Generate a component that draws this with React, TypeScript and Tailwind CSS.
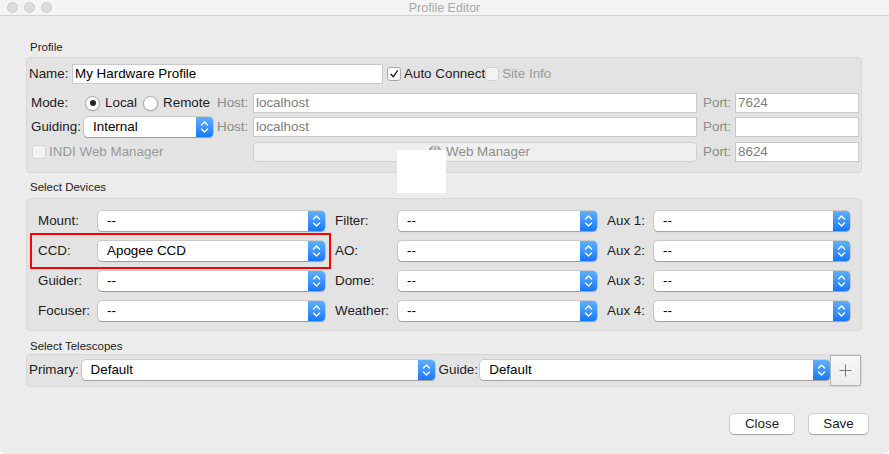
import React from "react";

const FONT = { fontFamily: '"Liberation Sans", Arial, sans-serif' };

function Stepper() {
  return (
    <div className="flex h-full w-[17px] shrink-0 items-center justify-center rounded-r-[4px] bg-gradient-to-b from-[#5fb0ff] to-[#1677fb]">
      <svg width="9" height="14" viewBox="0 0 9 14" fill="none" stroke="white" strokeWidth="1.4" strokeLinecap="round" strokeLinejoin="round">
        <path d="M1.5 5 L4.5 2 L7.5 5" />
        <path d="M1.5 9 L4.5 12 L7.5 9" />
      </svg>
    </div>
  );
}

function Combo({ value, width, className = "" }: { value: string; width: string; className?: string }) {
  return (
    <div
      className={`flex h-[20px] shrink-0 items-stretch rounded-[4px] bg-white shadow-[0_0_0_0.5px_rgba(0,0,0,0.22),0_1px_1px_rgba(0,0,0,0.22)] ${width} ${className}`}
    >
      <div className="flex flex-1 items-center whitespace-nowrap pl-[9px] text-black">{value}</div>
      <Stepper />
    </div>
  );
}

function Field({ value, width, muted }: { value: string; width: string; muted?: boolean }) {
  return (
    <div
      className={`flex h-[20px] shrink-0 items-center border border-[#c9c9c9] bg-white pl-[2px] ${width} ${
        muted ? "text-[#7d7d7d]" : "text-black"
      }`}
    >
      {value}
    </div>
  );
}

function Check({ checked, disabled }: { checked?: boolean; disabled?: boolean }) {
  return (
    <div
      className={`flex h-[14px] w-[14px] shrink-0 items-center justify-center rounded-[3px] border ${
        disabled ? "border-[#d2d2d2] bg-[#f3f3f3]" : "border-[#a9a9a9] bg-white"
      }`}
    >
      {checked && (
        <svg width="10" height="10" viewBox="0 0 10 10" fill="none" stroke="#222" strokeWidth="1.4" strokeLinecap="round" strokeLinejoin="round">
          <path d="M2 5.3 L4.2 7.8 L8.4 1.8" />
        </svg>
      )}
    </div>
  );
}

function Radio({ selected }: { selected?: boolean }) {
  return (
    <div className="flex h-[15px] w-[15px] shrink-0 items-center justify-center rounded-full border border-[#a7a7a7] bg-white shadow-[0_0.5px_1px_rgba(0,0,0,0.15)]">
      {selected && <div className="h-[6px] w-[6px] rounded-full bg-[#262626]" />}
    </div>
  );
}

function Globe() {
  return (
    <svg width="14" height="14" viewBox="0 0 14 14" fill="none" stroke="#9a9a9a" strokeWidth="1.1">
      <circle cx="7" cy="7" r="6" fill="#b5b5b5" />
      <ellipse cx="7" cy="7" rx="2.6" ry="6" stroke="#e8e8e8" />
      <path d="M1 7 H13" stroke="#e8e8e8" />
    </svg>
  );
}

function SectionLabel({ children, className }: { children: React.ReactNode; className: string }) {
  return <div className={`ml-[30px] h-[14px] text-[11.5px] leading-[14px] text-[#222] ${className}`}>{children}</div>;
}

const DEVICE_ROWS = [
  ["Mount:", "--", "Filter:", "--", "Aux 1:", "--"],
  ["CCD:", "Apogee CCD", "AO:", "--", "Aux 2:", "--"],
  ["Guider:", "--", "Dome:", "--", "Aux 3:", "--"],
  ["Focuser:", "--", "Weather:", "--", "Aux 4:", "--"],
];

export default function App() {
  return (
    <div style={FONT} className="relative h-[454px] w-[889px] overflow-hidden rounded-b-[5px] bg-[#ececec] text-[13.4px] text-[#1d1d1d]">
      {/* title bar */}
      <div className="relative flex h-[16px] items-center border-b border-[#d3d3d3] bg-[#f4f4f4]">
        <div className="flex gap-[6px] pl-[7px]">
          <div className="h-[11px] w-[11px] rounded-full border border-[#cdcdcd] bg-[#dcdcdc]" />
          <div className="h-[11px] w-[11px] rounded-full border border-[#cdcdcd] bg-[#dcdcdc]" />
          <div className="h-[11px] w-[11px] rounded-full border border-[#cdcdcd] bg-[#dcdcdc]" />
        </div>
        <div className="absolute left-0 right-0 top-0 text-center text-[12.5px] leading-[16px] text-[#a9a9a9]">Profile Editor</div>
      </div>

      {/* Profile */}
      <SectionLabel className="mt-[24px]">Profile</SectionLabel>
      <div className="ml-[26px] mt-[3px] h-[116px] w-[836px] rounded-[4px] border border-[#d8d8d8] bg-[#e3e3e3]">
        <div className="mt-[6px] flex h-[20px] items-center pl-[2px]">
          <div className="w-[43px]">Name:</div>
          <Field value="My Hardware Profile" width="w-[311px]" />
          <div className="ml-[4px]">
            <Check checked />
          </div>
          <div className="ml-[3px] whitespace-nowrap">Auto Connect</div>
          <Check disabled />
          <div className="ml-[3px] text-[#9a9a9a]">Site Info</div>
        </div>

        <div className="mt-[9px] flex h-[20px] items-center">
          <div className="flex w-[190px] items-center pl-[4px]">
            <div className="w-[54px]">Mode:</div>
            <Radio selected />
            <div className="ml-[5px]">Local</div>
            <div className="ml-[6px]">
              <Radio />
            </div>
            <div className="ml-[5px]">Remote</div>
          </div>
          <div className="w-[36px] text-[#8a8a8a]">Host:</div>
          <Field value="localhost" width="w-[444px]" muted />
          <div className="ml-[6px] w-[32px] text-[#8a8a8a]">Port:</div>
          <Field value="7624" width="w-[124px]" muted />
        </div>

        <div className="mt-[4px] flex h-[20px] items-center">
          <div className="flex w-[190px] items-center pl-[4px]">
            <div className="w-[53px]">Guiding:</div>
            <Combo value="Internal" width="w-[129px]" />
          </div>
          <div className="w-[36px] text-[#8a8a8a]">Host:</div>
          <Field value="localhost" width="w-[444px]" muted />
          <div className="ml-[6px] w-[32px] text-[#8a8a8a]">Port:</div>
          <Field value="" width="w-[124px]" muted />
        </div>

        <div className="mt-[5px] flex h-[20px] items-center">
          <div className="flex w-[190px] items-center pl-[5px]">
            <Check disabled />
            <div className="ml-[3px] whitespace-nowrap text-[#9a9a9a]">INDI Web Manager</div>
          </div>
          <div className="w-[36px]" />
          <div className="flex h-[20px] w-[444px] items-center justify-center gap-[4px] rounded-[4px] border border-[#d0d0d0] bg-[#efefef] pl-[8px] text-[#8d8d8d]">
            <Globe />
            <span>Web Manager</span>
          </div>
          <div className="ml-[6px] w-[32px] text-[#8a8a8a]">Port:</div>
          <Field value="8624" width="w-[124px]" muted />
        </div>
      </div>

      {/* Select Devices */}
      <SectionLabel className="mt-[7px]">Select Devices</SectionLabel>
      <div className="ml-[26px] mt-[4px] flex h-[133px] w-[836px] flex-col gap-[10px] rounded-[4px] border border-[#d8d8d8] bg-[#e3e3e3] pl-[11px] pt-[12px]">
        {DEVICE_ROWS.map(([l1, v1, l2, v2, l3, v3]) => (
          <div key={l1} className="flex h-[20px] items-center">
            <div className="w-[60px]">{l1}</div>
            <Combo value={v1} width="w-[227px]" />
            <div className="ml-[10px] w-[63px]">{l2}</div>
            <Combo value={v2} width="w-[199px]" />
            <div className="ml-[10px] w-[47px]">{l3}</div>
            <Combo value={v3} width="w-[196px]" />
          </div>
        ))}
      </div>

      {/* Select Telescopes */}
      <SectionLabel className="mt-[8px]">Select Telescopes</SectionLabel>
      <div className="ml-[26px] mt-[1px] flex h-[33px] w-[836px] items-start rounded-[4px] border border-[#d8d8d8] bg-[#e3e3e3] pl-[2px]">
        <div className="mt-[5px] flex h-[20px] w-[53px] items-center">Primary:</div>
        <Combo value="Default" width="w-[353px]" className="mt-[5px]" />
        <div className="ml-[4px] mt-[5px] flex h-[20px] w-[42px] items-center">Guide:</div>
        <Combo value="Default" width="w-[350px]" className="mt-[5px]" />
        <div className="flex h-[31px] w-[31px] items-center justify-center border border-[#b3b3b3] bg-gradient-to-b from-[#f7f7f7] to-[#ececec]">
          <svg width="13" height="13" viewBox="0 0 13 13" stroke="#7a7a7a" strokeWidth="1">
            <path d="M6.5 0.5 V12.5 M0.5 6.5 H12.5" />
          </svg>
        </div>
      </div>

      {/* dialog buttons */}
      <div className="mt-[27px] flex justify-end gap-[15px] pr-[21px]">
        <div className="flex h-[20px] w-[64px] items-center justify-center rounded-[4px] bg-white shadow-[0_0_0_0.5px_rgba(0,0,0,0.25),0_1px_1px_rgba(0,0,0,0.2)]">
          Close
        </div>
        <div className="flex h-[20px] w-[59px] items-center justify-center rounded-[4px] bg-white shadow-[0_0_0_0.5px_rgba(0,0,0,0.25),0_1px_1px_rgba(0,0,0,0.2)]">
          Save
        </div>
      </div>

      {/* overlays */}
      <div className="absolute left-[397px] top-[150px] h-[43px] w-[49px] bg-white" />
      <div className="absolute left-[30px] top-[233px] h-[36px] w-[301px] border-2 border-[#ff0000]" />
    </div>
  );
}
